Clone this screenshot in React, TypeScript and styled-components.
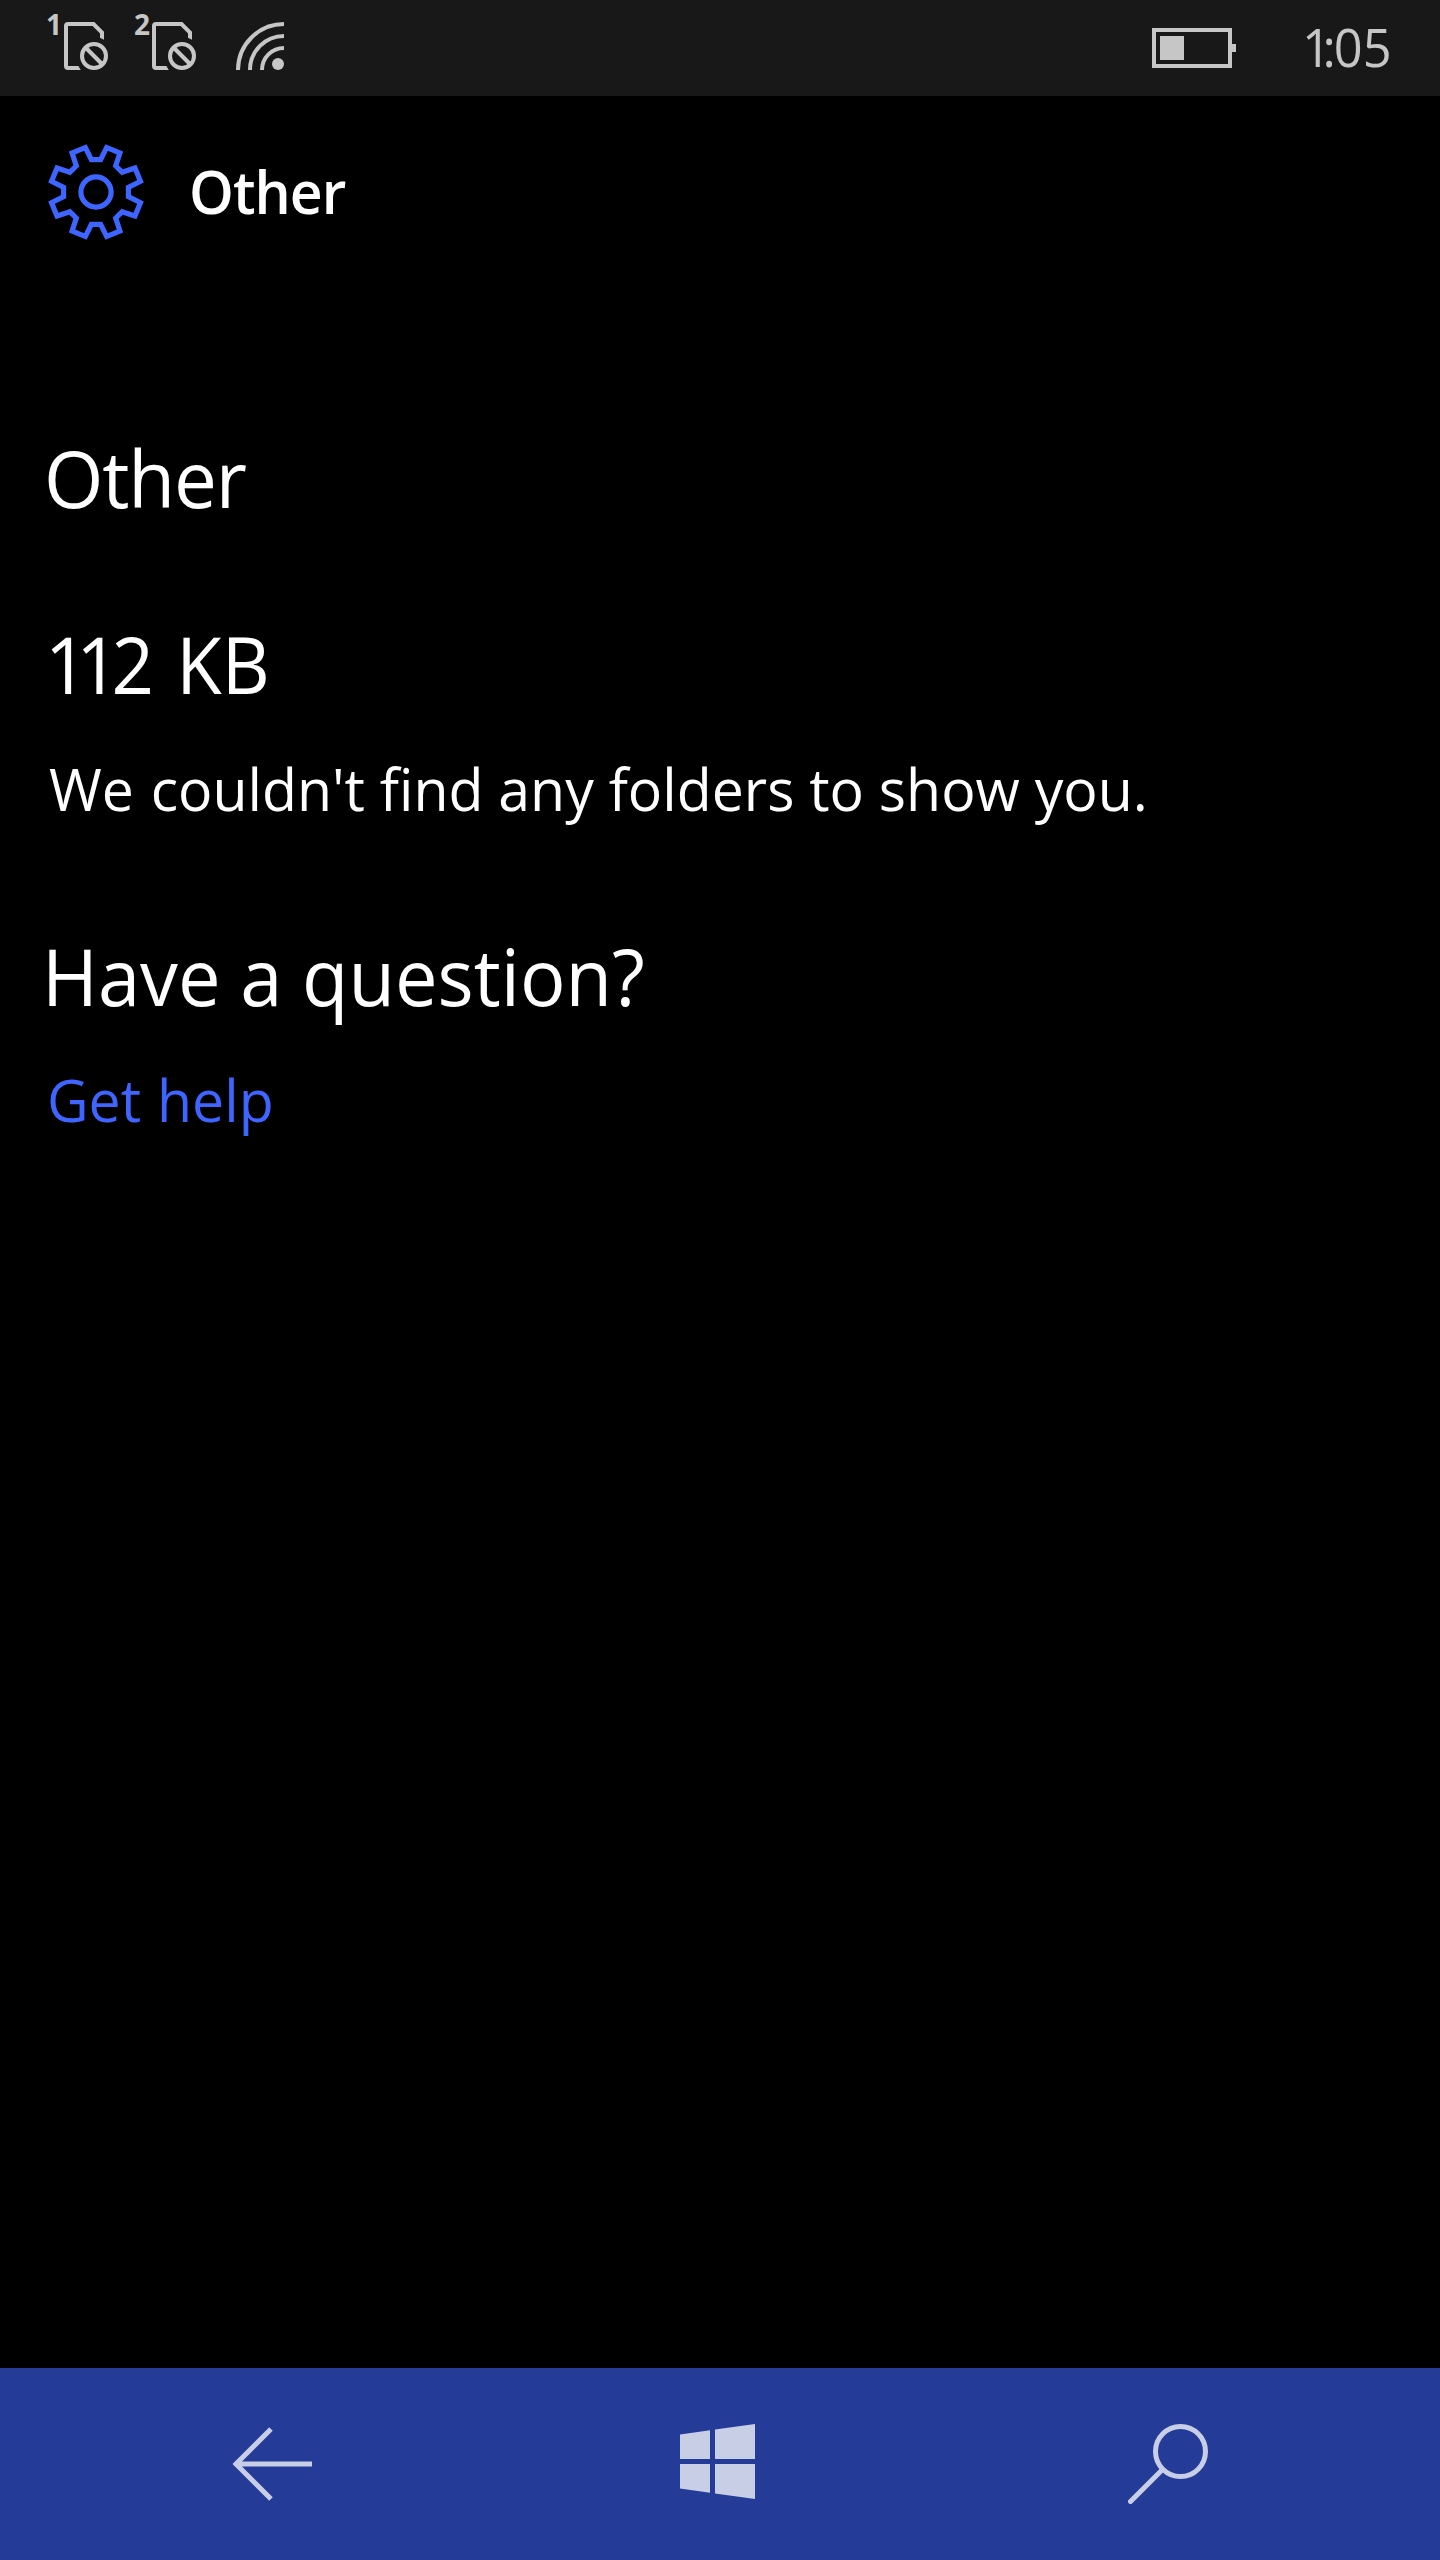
import React from "react";
import styled, { createGlobalStyle } from "styled-components";

const GlobalStyle = createGlobalStyle`
  html, body {
    margin: 0;
    background: #000;
  }
`;

const color = {
  chrome: "#181818",
  glyph: "#c6c6c6",
  text: "#fff",
  accent: "#3e65ff",
  nav: "#243c98",
  navGlyph: "#c8cee6",
};

const Screen = styled.div`
  display: flex;
  flex-direction: column;
  width: 1440px;
  height: 2560px;
  overflow: hidden;
  background: #000;
  color: ${color.text};
  font-family: "Open Sans", "Noto Sans", sans-serif;
`;

const StatusBar = styled.header`
  display: flex;
  justify-content: space-between;
  height: 96px;
  box-sizing: border-box;
  padding: 0 50px 0 48px;
  background: ${color.chrome};
  color: ${color.glyph};
`;

const StatusGroup = styled.div`
  display: flex;
  align-items: flex-start;
`;

const Sim = styled.div`
  display: flex;
  width: 88px;
`;

const SimSlot = styled.span`
  width: 16px;
  margin-top: 7px;
  font-size: 28px;
  font-weight: 700;
  line-height: 34px;
  text-indent: -2px;
`;

const SimGlyph = styled.svg`
  flex: none;
  margin-top: 20px;
`;

const SignalGlyph = styled.svg`
  margin: 22px 0 0 12px;
`;

const BatteryGlyph = styled.svg`
  margin: 28px 66px 0 0;
`;

const Clock = styled.time`
  width: 88px;
  margin-top: 9px;
  font-size: 53.5px;
  line-height: 76px;
  white-space: nowrap;
  transform: scaleX(0.945);
  transform-origin: 0 0;
`;

const Kern = styled.span<{ $by: number }>`
  letter-spacing: ${(p) => p.$by}px;
`;

const TitleBar = styled.div`
  display: flex;
  align-items: center;
  gap: 44px;
  height: 192px;
  padding-left: 46px;
`;

const Line = styled.p<{ $squeeze: number; $indent?: number; $gap?: number; $track?: number }>`
  margin: ${(p) => p.$gap ?? 0}px 0 0 ${(p) => p.$indent ?? 0}px;
  letter-spacing: ${(p) => (p.$track ? `${p.$track}px` : "normal")};
  white-space: nowrap;
  transform: scaleX(${(p) => p.$squeeze});
  transform-origin: 0 0;
`;

const Title = styled(Line).attrs({ as: "h1" })`
  padding-bottom: 3px;
  font-size: 59px;
  font-weight: 600;
  line-height: 80px;
`;

const Heading = styled(Line).attrs({ as: "h2" })`
  font-size: 79px;
  font-weight: 400;
  line-height: 108px;
`;

const Body = styled(Line)`
  font-size: 59px;
  line-height: 80px;
`;

const HelpLink = styled.a`
  color: ${color.accent};
  text-decoration: none;
`;

const Content = styled.main`
  flex: 1;
  padding: 136px 0 0 40px;
`;

const NavBar = styled.nav`
  display: flex;
  align-items: center;
  justify-content: space-between;
  height: 192px;
  box-sizing: border-box;
  padding: 0 232px;
  background: ${color.nav};
`;

const NavButton = styled.button`
  display: block;
  width: 80px;
  height: 80px;
  padding: 0;
  border: 0;
  background: none;
  color: ${color.navGlyph};

  svg {
    display: block;
  }
`;

const SimCard = ({ slot }: { slot: number }) => (
  <Sim>
    <SimSlot>{slot}</SimSlot>
    <SimGlyph width="48" height="52" viewBox="0 0 48 52" fill="none" stroke="currentColor" strokeWidth="4">
      <path d="M14.6 48 H4 Q2 48 2 46 V6 Q2 4 4 4 H29.5 L38 12.5 V18" />
      <path d="M14.4 46 L16.8 50 H14Z M36 17.8 L40 19.8 V17.8Z" fill="currentColor" stroke="none" />
      <circle cx="30" cy="36" r="12" />
      <path d="M21.5 27.5 L38.5 44.5" />
    </SimGlyph>
  </Sim>
);

// One notch of the gear, centred on 12 o'clock; repeated every 45 degrees.
const notch: [number, number][] = [
  [-9.4, -47.8],
  [-3, -35],
  [3, -35],
  [9.4, -47.8],
];

const gearOutline = Array.from({ length: 8 }, (_, i) => {
  const a = (i * Math.PI) / 4;
  return notch
    .map(([x, y]) => `${(x * Math.cos(a) - y * Math.sin(a)).toFixed(2)},${(x * Math.sin(a) + y * Math.cos(a)).toFixed(2)}`)
    .join(" ");
}).join(" ");

const Gear = () => (
  <svg width="100" height="100" viewBox="-50 -50 100 100" fill="none" stroke={color.accent}>
    <clipPath id="gear-edge">
      <polygon points={gearOutline} />
    </clipPath>
    <polygon points={gearOutline} strokeWidth="10.4" clipPath="url(#gear-edge)" />
    <circle r="15.1" strokeWidth="5.2" />
  </svg>
);

export default function App() {
  return (
    <>
      <GlobalStyle />
      <Screen>
        <StatusBar>
          <StatusGroup>
            <SimCard slot={1} />
            <SimCard slot={2} />
            <SignalGlyph width="48" height="48" viewBox="0 0 48 48" fill="none" stroke="currentColor" strokeWidth="4">
              <path d="M2 48 A46 46 0 0 1 48 2 M14 48 A34 34 0 0 1 48 14 M26 48 A22 22 0 0 1 48 26" />
              <circle cx="42" cy="42" r="6" fill="currentColor" stroke="none" />
            </SignalGlyph>
          </StatusGroup>
          <StatusGroup>
            <BatteryGlyph width="84" height="40" viewBox="0 0 84 40" fill="currentColor">
              <rect x="2" y="2" width="76" height="36" fill="none" stroke="currentColor" strokeWidth="4" />
              <rect x="8" y="8" width="24" height="24" />
              <rect x="80" y="16" width="4" height="8" />
            </BatteryGlyph>
            <Clock>
              <Kern $by={-9}>1</Kern>
              <Kern $by={-2}>:</Kern>05
            </Clock>
          </StatusGroup>
        </StatusBar>

        <TitleBar>
          <Gear />
          <Title $squeeze={0.967} $indent={-1} $track={-1}>Other</Title>
        </TitleBar>

        <Content>
          <Heading $squeeze={0.967} $indent={4} $track={-1.2}>Other</Heading>
          <Heading $squeeze={0.94} $indent={4.5} $gap={78}>
            <Kern $by={-12}>1</Kern>
            <Kern $by={-7.6}>1</Kern>2<Kern $by={3.2}> </Kern>KB
          </Heading>
          <Body $squeeze={0.969} $indent={9} $gap={30}>
            We<Kern $by={2}> </Kern>couldn't find any folders to show you.
          </Body>
          <Heading $squeeze={0.96} $indent={1.7} $gap={94}>Have a question?</Heading>
          <Body $squeeze={0.97} $indent={7.3} $gap={29}>
            <HelpLink href="#">Get<Kern $by={1}> </Kern>help</HelpLink>
          </Body>
        </Content>

        <NavBar>
          <NavButton aria-label="Back">
            <svg width="80" height="80" fill="none" stroke="currentColor" strokeWidth="5">
              <path d="M39 5 L4 40 L39 75 M4 40 H80" />
            </svg>
          </NavButton>
          <NavButton aria-label="Start">
            <svg width="80" height="80" fill="currentColor">
              <path d="M0 10.4 L30 6.2 V35 H0Z M35 5.5 L75 0 V35 H35Z M0 40 H30 V68.8 L0 64.6Z M35 40 H75 V75 L35 69.5Z" />
            </svg>
          </NavButton>
          <NavButton aria-label="Search">
            <svg width="80" height="80" fill="none" stroke="currentColor" strokeWidth="5">
              <circle cx="52.5" cy="27.5" r="25" />
              <path d="M34.5 45.5 L2.5 77.5" strokeLinecap="round" />
            </svg>
          </NavButton>
        </NavBar>
      </Screen>
    </>
  );
}
